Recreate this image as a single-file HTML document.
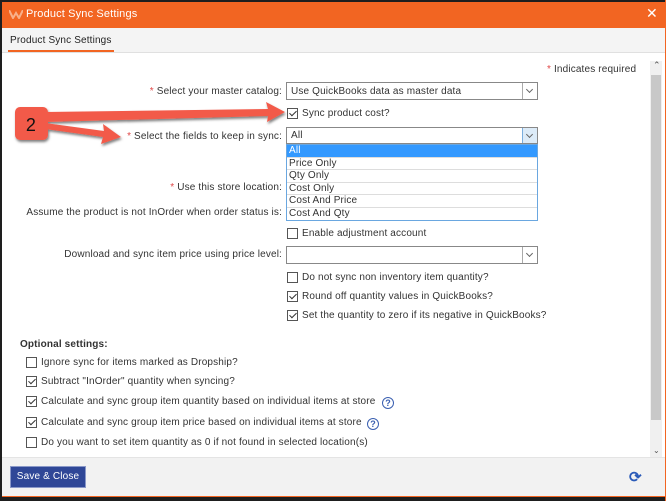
<!DOCTYPE html>
<html><head><style>
*{margin:0;padding:0;box-sizing:border-box}
body{width:670px;height:501px;background:#1e1e1e;position:relative;overflow:hidden;font-family:"Liberation Sans",Tahoma,sans-serif;font-size:10px;color:#333;letter-spacing:0.15px}
.a{position:absolute;white-space:nowrap}
.r{text-align:right;width:280px;left:2px}
.star{color:#e04848}
.cb{position:absolute;width:11px;height:11px;border:1px solid #555;background:#fff}
.cb.c::after{content:"";position:absolute;left:3px;top:0px;width:3px;height:6px;border:solid #333;border-width:0 1px 1px 0;transform:rotate(45deg)}
.sel{position:absolute;border:1px solid #888;background:#fff;height:18px}
.sel .ar{position:absolute;right:0;top:0;bottom:0;width:15px;border-left:1px solid #aaa}
.sel .ar::after{content:"";position:absolute;left:4px;top:4px;width:4px;height:4px;border:solid #666;border-width:0 1px 1px 0;transform:rotate(45deg)}
.sel span{position:absolute;left:4px;top:3px}
.help{position:absolute;width:12px;height:12px;border:1.5px solid #3a5fb0;border-radius:50%;color:#3a5fb0;font-size:9px;font-weight:bold;text-align:center;line-height:10px;letter-spacing:0}
.dd div{height:12.6px;line-height:12px;padding-left:2px;border-bottom:1px solid #ddd}
</style></head><body>
<div class="a" style="left:2px;top:2px;width:663px;height:495px;background:#fff"></div>
<div class="a" style="left:665px;top:0;width:5px;height:501px;background:#fff;border-left:1px solid #f26522"></div>
<div class="a" style="left:2px;top:2px;width:663px;height:26px;background:#f26522"></div>
<svg class="a" style="left:9px;top:10px" width="14" height="9"><path d="M0,0 L4,8 L7,3 L10,8 L14,0" fill="none" stroke="#f8b08a" stroke-width="2"/></svg>
<div class="a" style="left:26px;top:8px;color:#fff;font-size:11px">Product Sync Settings</div>
<div class="a" style="left:646px;top:5px;color:#fff;font-size:14px">✕</div>
<div class="a" style="left:2px;top:28px;width:663px;height:25px;background:#f4f4f4;border-bottom:1px solid #e0e0e0"></div>
<div class="a" style="left:10px;top:35px;color:#222">Product Sync Settings</div>
<div class="a" style="left:8px;top:50px;width:106px;height:2px;background:#f26522"></div>
<div class="a" style="left:650px;top:61px;width:12px;height:396px;background:#f0f0f0"></div>
<div class="a" style="left:651px;top:75px;width:10px;height:345px;background:#c8c8c8"></div>
<div class="a" style="left:653px;top:60px;font-size:9px;color:#555">⌃</div>
<div class="a" style="left:653px;top:446px;font-size:8px;color:#555">⌄</div>

<div class="a" style="left:547px;top:64px"><span class="star">*</span> Indicates required</div>
<div class="a r" style="top:86px"><span class="star">*</span> Select your master catalog:</div>
<div class="sel" style="left:286px;top:82px;width:252px"><span>Use QuickBooks data as master data</span><div class="ar"></div></div>
<div class="cb c" style="left:287px;top:108px"></div><div class="a" style="left:302px;top:108px">Sync product cost?</div>
<div class="a r" style="top:131px"><span class="star">*</span> Select the fields to keep in sync:</div>
<div class="sel" style="left:286px;top:127px;width:252px;height:17px"><span style="top:2px">All</span><div class="ar" style="background:#dcebf8;border-left-color:#7aaede"></div></div>
<div class="a dd" style="left:286px;top:144px;width:252px;height:77px;border:1px solid #6aa7e0;background:#fff">
<div style="background:#3399ff;color:#fff">All</div><div>Price Only</div><div>Qty Only</div><div>Cost Only</div><div>Cost And Price</div><div style="border:0">Cost And Qty</div></div>
<div class="a r" style="top:182px"><span class="star">*</span> Use this store location:</div>
<div class="a r" style="top:207px">Assume the product is not InOrder when order status is:</div>
<div class="cb" style="left:287px;top:228px"></div><div class="a" style="left:302px;top:228px">Enable adjustment account</div>
<div class="a r" style="top:249px">Download and sync item price using price level:</div>
<div class="sel" style="left:286px;top:246px;width:252px"><div class="ar"></div></div>
<div class="cb" style="left:287px;top:272px"></div><div class="a" style="left:302px;top:272px">Do not sync non inventory item quantity?</div>
<div class="cb c" style="left:287px;top:291px"></div><div class="a" style="left:302px;top:291px">Round off quantity values in QuickBooks?</div>
<div class="cb c" style="left:287px;top:310px"></div><div class="a" style="left:302px;top:310px">Set the quantity to zero if its negative in QuickBooks?</div>

<div class="a" style="left:20px;top:339px;font-weight:bold">Optional settings:</div>
<div class="cb" style="left:26px;top:357px"></div><div class="a" style="left:41px;top:357px">Ignore sync for items marked as Dropship?</div>
<div class="cb c" style="left:26px;top:376px"></div><div class="a" style="left:41px;top:376px">Subtract "InOrder" quantity when syncing?</div>
<div class="cb c" style="left:26px;top:396px"></div><div class="a" style="left:41px;top:396px">Calculate and sync group item quantity based on individual items at store</div>
<div class="help" style="left:382px;top:397px">?</div>
<div class="cb c" style="left:26px;top:417px"></div><div class="a" style="left:41px;top:417px">Calculate and sync group item price based on individual items at store</div>
<div class="help" style="left:367px;top:418px">?</div>
<div class="cb" style="left:26px;top:437px"></div><div class="a" style="left:41px;top:437px">Do you want to set item quantity as 0 if not found in selected location(s)</div>

<div class="a" style="left:2px;top:457px;width:663px;height:39px;background:#f2f2f2;border-top:1px solid #e4e4e4"></div>
<div class="a" style="left:10px;top:466px;width:76px;height:22px;background:#2f4797;border:1px solid #8a98c8;color:#fff;text-align:center;line-height:20px">Save &amp; Close</div>
<div class="a" style="left:629px;top:468px;color:#2a5ab8;font-size:15px;font-weight:bold">⟳</div>
<div class="a" style="left:2px;top:496px;width:663px;height:1px;background:#f26522"></div>

<svg class="a" style="left:0;top:100px" width="300" height="50">
<defs><filter id="s"><feDropShadow dx="1" dy="2" stdDeviation="1.2" flood-opacity=".5"/></filter></defs>
<g fill="#f25a4a" filter="url(#s)">
<polygon points="45,12 268,9 266,2 285,12 267,22 268,16 45,22"/>
<polygon points="45,23 104,31 103,24 121,37 101,44 103,37 45,29"/>
<rect x="15" y="7" width="33" height="33" rx="5"/>
</g>
<text x="31" y="31" text-anchor="middle" font-family="Liberation Sans" font-size="18" fill="#111">2</text>
</svg>
</body></html>
